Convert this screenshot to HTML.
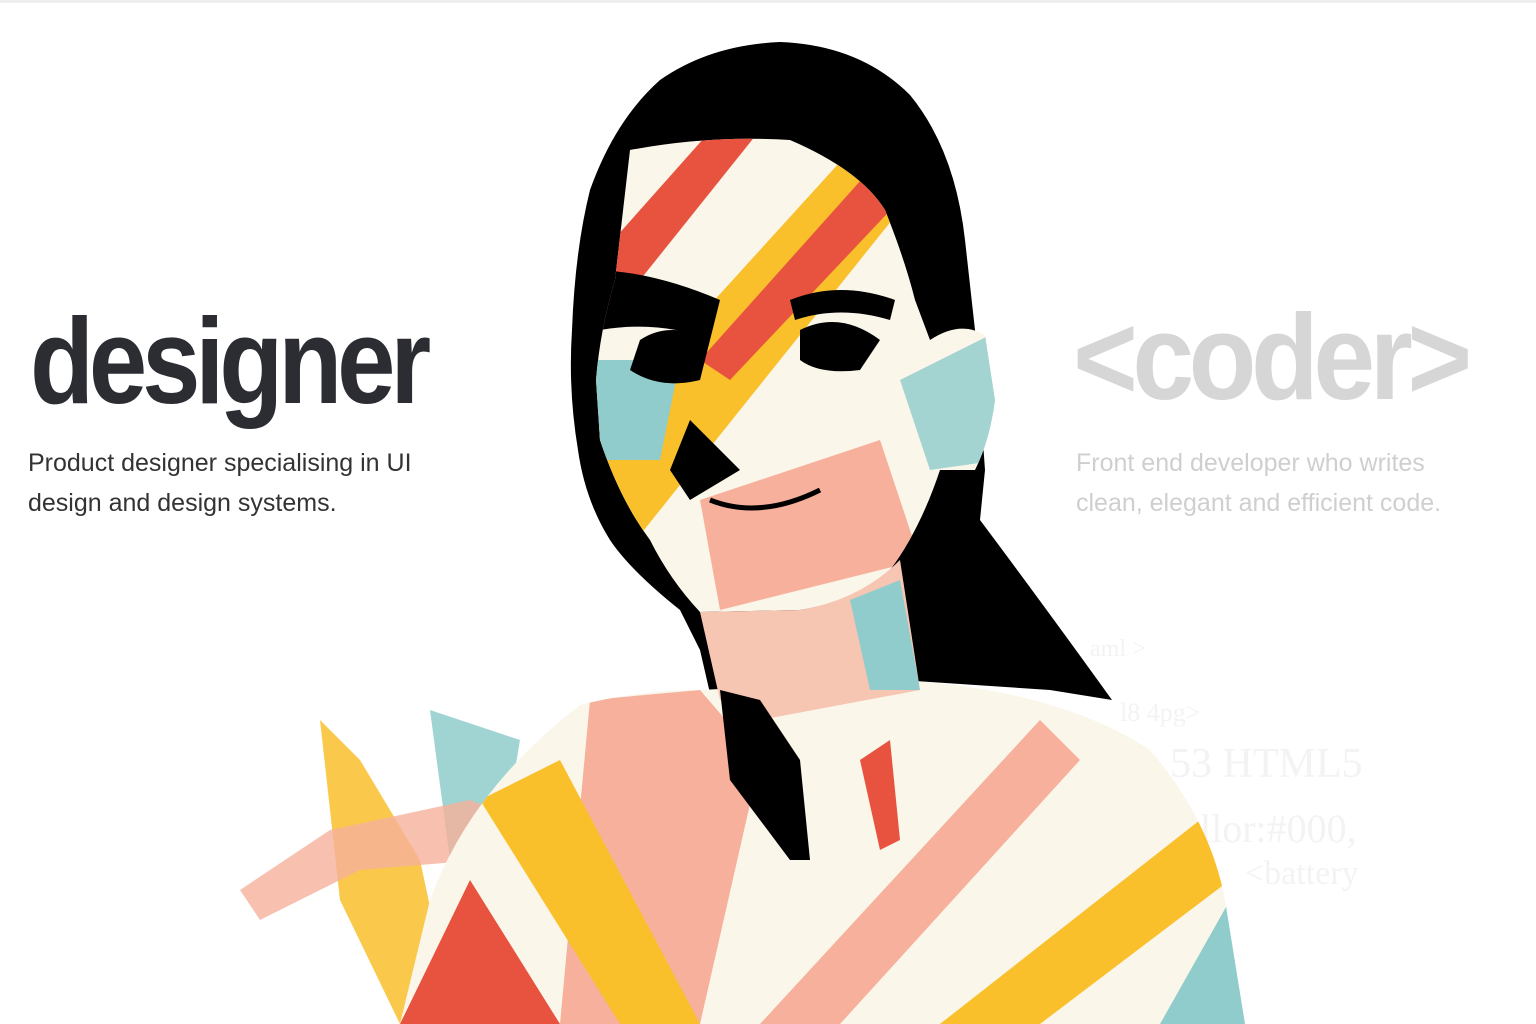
<!DOCTYPE html>
<html><head><meta charset="utf-8"><style>
html,body{margin:0;padding:0;background:#fff;}
body{width:1536px;height:1024px;position:relative;overflow:hidden;font-family:"Liberation Sans",sans-serif;}
.topline{position:absolute;left:0;top:0;width:1536px;height:3px;background:#eee;}
.h{position:absolute;font-weight:bold;font-size:122px;letter-spacing:-6px;transform-origin:0 0;line-height:1;}
.p{position:absolute;font-size:25px;line-height:40px;font-weight:normal;}
.code{position:absolute;font-family:"Liberation Serif",serif;color:#f3f3f3;}
</style></head><body>
<div class="topline"></div>
<div class="code" style="left:1090px;top:636px;font-size:24px;">aml &gt;</div>
<div class="code" style="left:1120px;top:698px;font-size:26px;">l8 4pg&gt;</div>
<div class="code" style="left:1170px;top:740px;font-size:42px;">53 HTML5</div>
<div class="code" style="left:1200px;top:805px;font-size:40px;">llor:#000,</div>
<div class="code" style="left:1245px;top:855px;font-size:34px;">&lt;battery</div>

<svg width="1536" height="1024" style="position:absolute;left:0;top:0">
<defs>
<clipPath id="face"><path d="M630,150 Q710,135 790,140 Q860,170 885,210 Q905,260 915,300 L930,340 Q960,320 985,335 L995,400 Q990,440 975,470 L940,470 Q920,530 890,570 Q860,600 800,610 L700,612 Q670,580 650,540 Q620,500 600,440 L596,380 Q600,330 615,280 Z"/></clipPath>
<clipPath id="body"><path d="M400,1024 L430,900 Q470,790 580,705 Q640,690 700,690 L900,680 Q1060,690 1150,750 Q1210,820 1225,900 L1245,1024 Z"/></clipPath>
</defs>
<path d="M320,720 L360,760 L420,860 L450,1000 L400,1024 L340,900 Z" fill="#f9c02c" opacity="0.85"/>
<path d="M430,710 L520,740 L500,860 L450,860 Z" fill="#8fcccb" opacity="0.85"/>
<path d="M240,890 L330,830 L470,800 L520,820 L480,860 L360,870 L260,920 Z" fill="#f6b09b" opacity="0.8"/>
<!-- hair -->
<path d="M780,42 Q860,45 910,95 Q955,150 965,240 L975,330 L985,470 L980,520 Q1040,600 1112,700 L1050,690 L900,680 L800,760 L810,860 L790,860 L730,780 L700,650 L680,610 Q630,570 610,540 Q585,500 578,450 Q568,390 572,330 Q575,250 590,190 Q615,120 660,80 Q710,45 780,42 Z" fill="#000"/>
<g clip-path="url(#face)">
<rect x="580" y="130" width="430" height="500" fill="#fbf6ea"/>
<path d="M560,300 L720,120 L760,130 L600,330 Z" fill="#e8533f"/>
<path d="M560,470 L860,140 L940,160 L620,560 Z" fill="#f9c02c"/>
<path d="M700,360 L870,170 L900,200 L730,380 Z" fill="#e8533f"/>
<path d="M590,360 L680,360 L660,460 L600,460 Z" fill="#8fcccb"/>
<path d="M700,500 L880,440 L920,560 L720,610 Z" fill="#f6b09b"/>
<path d="M900,380 L1000,330 L1000,460 L930,470 Z" fill="#8fcccb" opacity="0.8"/>
<path d="M590,270 Q650,270 720,300 L710,340 Q660,320 600,330 Z" fill="#000"/>
<path d="M790,300 Q840,280 895,300 L890,320 Q840,305 795,320 Z" fill="#000"/>
<path d="M640,340 Q670,320 710,340 L700,380 Q660,390 630,370 Z" fill="#000"/>
<path d="M800,330 Q840,310 880,340 L860,370 Q820,375 800,360 Z" fill="#000"/>
<path d="M690,420 L740,470 L690,500 L670,470 Z" fill="#000"/>
<path d="M710,500 Q760,520 820,490" stroke="#000" stroke-width="5" fill="none"/>
</g>
<g clip-path="url(#body)">
<rect x="380" y="660" width="880" height="380" fill="#fbf6ea"/>
<path d="M590,700 L700,690 L760,760 L700,1024 L560,1024 Z" fill="#f6b09b"/>
<path d="M400,1024 L470,880 L560,1024 Z" fill="#e8533f"/>
<path d="M480,800 L560,760 L700,1024 L620,1024 Z" fill="#f9c02c"/>
<path d="M760,1024 L1040,720 L1080,760 L840,1024 Z" fill="#f6b09b"/>
<path d="M940,1024 L1200,820 L1230,880 L1040,1024 Z" fill="#f9c02c"/>
<path d="M1160,1024 L1230,900 L1250,1024 Z" fill="#8fcccb"/>
<path d="M860,760 L890,740 L900,840 L880,850 Z" fill="#e8533f"/>
</g>
<path d="M700,612 L800,610 Q860,600 900,560 L920,690 L760,720 L720,700 Z" fill="#f7c6b3"/>
<path d="M850,600 L900,580 L920,690 L870,690 Z" fill="#8fcccb"/>
<path d="M720,690 L760,700 L800,760 L810,860 L790,860 L730,780 Z" fill="#000"/>
</svg>

<div class="h" style="left:30px;top:300px;color:#2b2d33;transform:scaleX(0.86)">designer</div>
<div class="p" style="left:28px;top:443px;color:#333;width:440px">Product designer specialising in UI<br>design and design systems.</div>
<div class="h" style="left:1073px;top:296px;color:#d6d6d6;transform:scaleX(0.91)">&lt;coder&gt;</div>
<div class="p" style="left:1076px;top:443px;color:#cfcfcf;width:440px">Front end developer who writes<br>clean, elegant and efficient code.</div>
</body></html>
